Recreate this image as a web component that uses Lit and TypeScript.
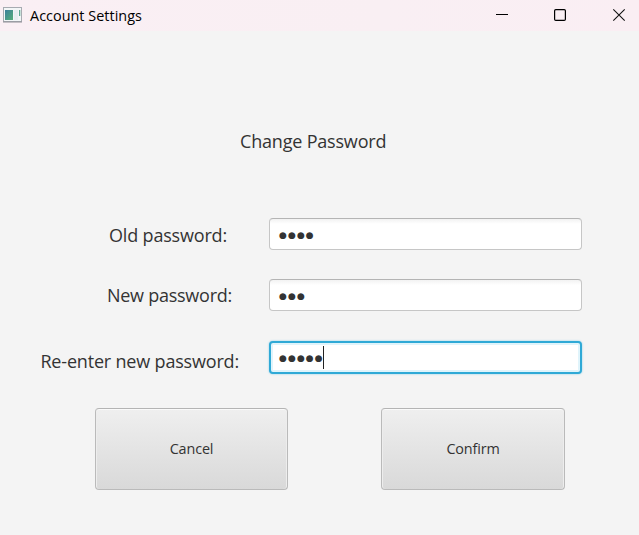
import { LitElement, html, css } from "lit";
import { customElement, property } from "lit/decorators.js";
import { classMap } from "lit/directives/class-map.js";

@customElement("window-bar")
class WindowBar extends LitElement {
  static styles = css`
    :host { display: flex; height: 31px; background: linear-gradient(90deg, #faeff4, #f9eff3 60%, #faeef3); }
    .icon { width: 20px; height: 16px; margin: 7px 0 0 3px; flex: none; }
    .title { margin-left: 7px; flex: 1; font-size: 14.4px; line-height: 32px; color: #000; letter-spacing: 0.03px; white-space: nowrap; }
    .controls { display: flex; gap: 43px; padding: 8px 13px 0 0; }
    .controls svg { width: 15px; height: 15px; display: block; }
  `;
  render() {
    return html`
      <svg class="icon" viewBox="0 0 20 16">
        <defs>
          <linearGradient id="g" x1="0" y1="0" x2="1" y2="1">
            <stop offset="0" stop-color="#3d7f9c" /><stop offset="1" stop-color="#55b078" />
          </linearGradient>
        </defs>
        <rect x=".5" y=".5" width="18" height="14" fill="#f3f6f7" stroke="#a7abb1" />
        <path d="M0 15h19" stroke="#8f8f96" />
        <rect x="2" y="3" width="8" height="10" fill="url(#g)" />
        <rect x="11" y="3" width="4" height="10" fill="#e6eff0" />
        <rect x="16" y="3" width="1.3" height="6" fill="#62ab94" />
      </svg>
      <span class="title">Account Settings</span>
      <div class="controls">
        <svg viewBox="0 0 15 15"><path d="M1 6.5h12" stroke="#000" /></svg>
        <svg viewBox="0 0 15 15"><rect x="1.6" y="1.6" width="10.8" height="10.8" rx="1.2" fill="none" stroke="#000" stroke-width="1.2" /></svg>
        <svg viewBox="0 0 15 15"><path d="M2.3 1.3l11.4 11.4M13.7 1.3L2.3 12.7" stroke="#111" stroke-width="1.1" /></svg>
      </div>
    `;
  }
}

@customElement("password-field")
class PasswordField extends LitElement {
  @property({ type: Number }) count = 0;
  @property({ type: Boolean }) focused = false;
  static styles = css`
    :host { display: block; }
    .field { box-sizing: border-box; height: 32px; display: flex; align-items: center; padding: 1px 0 0 9px;
      border: 1px solid #c6c6c6; border-top-color: #b4b4b4; border-radius: 4px;
      background: linear-gradient(#f2f2f2, #fff 5px); }
    .field.focused { height: 33px; border: 2px solid #2fa9d6; padding: 0 0 0 8px; background: #fff;
      box-shadow: 0 0 2px #7cc9e5, inset 0 0 0 2px #e0f4fb; }
    .dots { font: 9px/20px "DejaVu Sans", sans-serif; letter-spacing: 1.1px; color: #333; }
    .caret { width: 1px; height: 23px; margin-left: -1px; background: #222; }
  `;
  render() {
    return html`<div class=${classMap({ field: true, focused: this.focused })}>
      <span class="dots">${"●".repeat(this.count)}</span>${this.focused ? html`<span class="caret"></span>` : null}
    </div>`;
  }
}

@customElement("app-root")
class AppRoot extends LitElement {
  static styles = css`
    :host { display: block; width: 639px; height: 535px; overflow: hidden; background: #f4f4f4; color: #333; font-family: "Open Sans", "Noto Sans", sans-serif; }
    h1 { margin: 97px 0 0 240px; font-size: 18px; font-weight: 400; line-height: 26px; letter-spacing: -0.19px; white-space: nowrap; }
    .form { margin: 64px 57px 0 0; display: grid; grid-template-columns: 269px 313px; grid-template-rows: 61px 62px 67px; }
    .label { justify-self: end; font-size: 18px; line-height: 26px; letter-spacing: -0.18px; white-space: nowrap; }
    .old { margin: 4px 42px 0 0; }
    .new { margin: 3px 37px 0 0; letter-spacing: -0.25px; }
    .again { margin: 7px 30px 0 0; }
    .actions { display: flex; gap: 93px; padding-left: 95px; }
    button { box-sizing: border-box; height: 82px; padding: 0 0 2px; border: 1px solid #bababa; border-top-color: #b4b4b4; border-radius: 4px;
      background: linear-gradient(#efefef, #d9d9d9); box-shadow: inset 0 1px #fafafa, inset 1px 0 #ededed, inset -1px 0 #ededed;
      color: #333; font: 14.4px "Open Sans", "Noto Sans", sans-serif; letter-spacing: -0.15px; }
    .cancel { width: 193px; }
    .confirm { width: 184px; }
  `;
  render() {
    return html`
      <window-bar></window-bar>
      <h1>Change Password</h1>
      <div class="form">
        <span class="label old">Old password:</span><password-field .count=${4}></password-field>
        <span class="label new">New password:</span><password-field .count=${3}></password-field>
        <span class="label again">Re-enter new password:</span><password-field .count=${5} .focused=${true}></password-field>
      </div>
      <div class="actions">
        <button class="cancel">Cancel</button>
        <button class="confirm">Confirm</button>
      </div>
    `;
  }
}
